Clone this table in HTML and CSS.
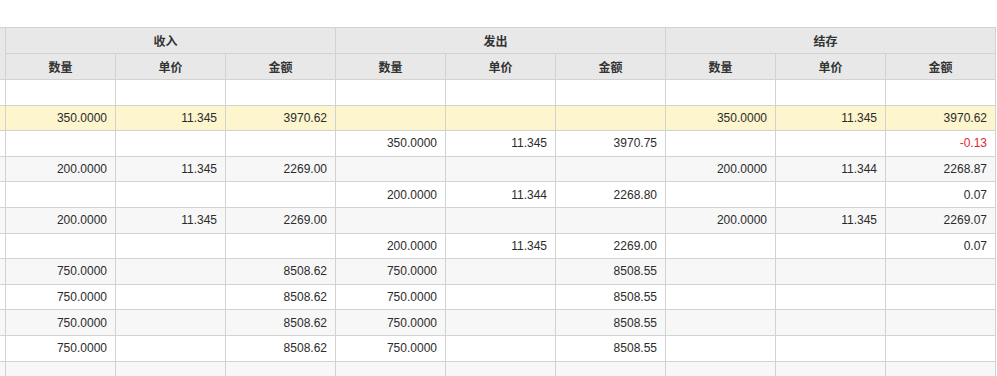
FILE: index.html
```html
<!DOCTYPE html>
<html lang="zh-CN">
<head>
<meta charset="utf-8">
<title>存货明细</title>
<link rel="stylesheet" href="styles.css">
</head>
<body>
<div class="sheet">
  <div class="head">
    <div class="hc lead"></div>
    <div class="hc group">收入</div>
    <div class="hc group">发出</div>
    <div class="hc group">结存</div>
    <div class="hc">数量</div><div class="hc">单价</div><div class="hc">金额</div>
    <div class="hc">数量</div><div class="hc">单价</div><div class="hc">金额</div>
    <div class="hc">数量</div><div class="hc">单价</div><div class="hc">金额</div>
  </div>
  <div class="rows">
    <div class="row"><div class="c"></div><div class="c"></div><div class="c"></div><div class="c"></div><div class="c"></div><div class="c"></div><div class="c"></div><div class="c"></div><div class="c"></div><div class="c"></div></div>
    <div class="row hl"><div class="c"></div><div class="c">350.0000</div><div class="c">11.345</div><div class="c">3970.62</div><div class="c"></div><div class="c"></div><div class="c"></div><div class="c">350.0000</div><div class="c">11.345</div><div class="c">3970.62</div></div>
    <div class="row"><div class="c"></div><div class="c"></div><div class="c"></div><div class="c"></div><div class="c">350.0000</div><div class="c">11.345</div><div class="c">3970.75</div><div class="c"></div><div class="c"></div><div class="c neg">-0.13</div></div>
    <div class="row"><div class="c"></div><div class="c">200.0000</div><div class="c">11.345</div><div class="c">2269.00</div><div class="c"></div><div class="c"></div><div class="c"></div><div class="c">200.0000</div><div class="c">11.344</div><div class="c">2268.87</div></div>
    <div class="row"><div class="c"></div><div class="c"></div><div class="c"></div><div class="c"></div><div class="c">200.0000</div><div class="c">11.344</div><div class="c">2268.80</div><div class="c"></div><div class="c"></div><div class="c">0.07</div></div>
    <div class="row"><div class="c"></div><div class="c">200.0000</div><div class="c">11.345</div><div class="c">2269.00</div><div class="c"></div><div class="c"></div><div class="c"></div><div class="c">200.0000</div><div class="c">11.345</div><div class="c">2269.07</div></div>
    <div class="row"><div class="c"></div><div class="c"></div><div class="c"></div><div class="c"></div><div class="c">200.0000</div><div class="c">11.345</div><div class="c">2269.00</div><div class="c"></div><div class="c"></div><div class="c">0.07</div></div>
    <div class="row"><div class="c"></div><div class="c">750.0000</div><div class="c"></div><div class="c">8508.62</div><div class="c">750.0000</div><div class="c"></div><div class="c">8508.55</div><div class="c"></div><div class="c"></div><div class="c"></div></div>
    <div class="row"><div class="c"></div><div class="c">750.0000</div><div class="c"></div><div class="c">8508.62</div><div class="c">750.0000</div><div class="c"></div><div class="c">8508.55</div><div class="c"></div><div class="c"></div><div class="c"></div></div>
    <div class="row"><div class="c"></div><div class="c">750.0000</div><div class="c"></div><div class="c">8508.62</div><div class="c">750.0000</div><div class="c"></div><div class="c">8508.55</div><div class="c"></div><div class="c"></div><div class="c"></div></div>
    <div class="row"><div class="c"></div><div class="c">750.0000</div><div class="c"></div><div class="c">8508.62</div><div class="c">750.0000</div><div class="c"></div><div class="c">8508.55</div><div class="c"></div><div class="c"></div><div class="c"></div></div>
    <div class="row"><div class="c"></div><div class="c"></div><div class="c"></div><div class="c"></div><div class="c"></div><div class="c"></div><div class="c"></div><div class="c"></div><div class="c"></div><div class="c"></div></div>
  </div>
</div>
</body>
</html>
```
FILE: styles.css
```css
html, body {
  margin: 0;
  padding: 0;
  overflow: hidden;
  background: #fff;
}
body {
  font-family: "Liberation Sans", Arial, "Noto Sans CJK SC", sans-serif;
  font-size: 12px;
  color: #2b2b2b;
}
.sheet {
  padding-top: 27px;
  width: 996px;
}
.head {
  display: grid;
  grid-template-columns: 6px repeat(9, 110px);
  grid-template-rows: 26px 26px;
  border-top: 1px solid #d2d2d2;
  background: #e8e8e8;
}
.hc {
  border-right: 1px solid #d2d2d2;
  border-bottom: 1px solid #d2d2d2;
  display: flex;
  align-items: center;
  justify-content: center;
  font-weight: bold;
  font-family: "Noto Sans CJK SC", sans-serif;
  font-size: 12px;
  color: #333;
  line-height: 1;
}
.hc.lead {
  grid-row: span 2;
}
.hc.group {
  grid-column: span 3;
  padding-right: 10px;
}
.row {
  display: grid;
  grid-template-columns: 6px repeat(9, 110px);
  height: 25.6px;
  background: #fff;
}
.row:nth-child(even) {
  background: #f7f7f7;
}
.row.hl {
  background: #fdf5cd;
}
.c {
  border-right: 1px solid #d2d2d2;
  border-bottom: 1px solid #d2d2d2;
  display: flex;
  align-items: center;
  justify-content: flex-end;
  padding-right: 8px;
  white-space: nowrap;
  overflow: hidden;
}
.c:first-child {
  padding-right: 0;
}
.c.neg {
  color: #e0262b;
}
```
